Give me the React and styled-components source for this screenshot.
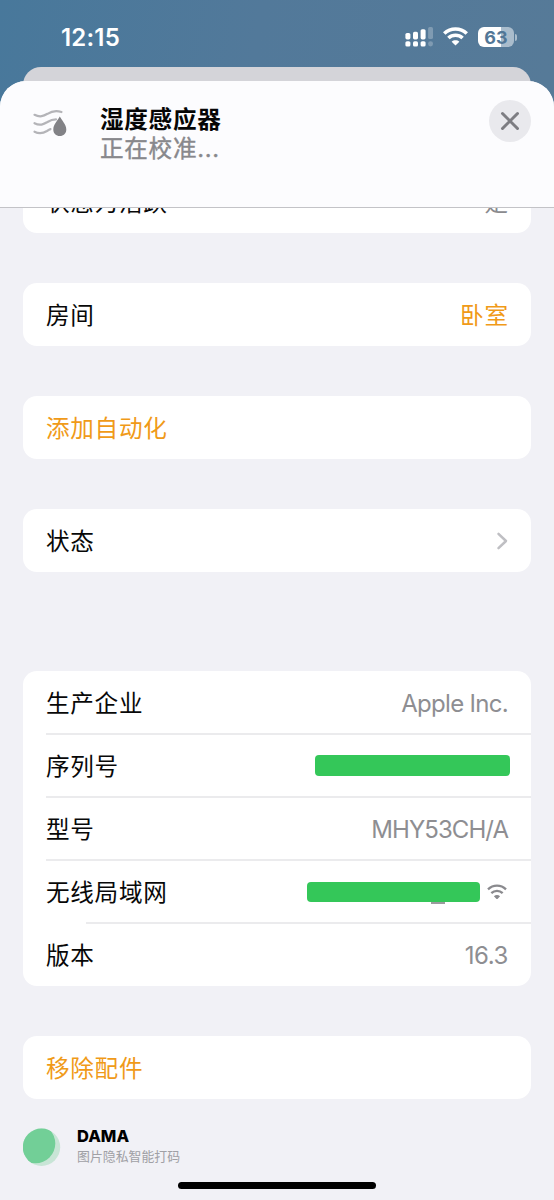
import React from "react";
import styled, { createGlobalStyle } from "styled-components";

const Global = createGlobalStyle`
  *, *::before, *::after { box-sizing: border-box; }
  html, body { margin: 0; padding: 0; }
  body { font-family: Inter, "Noto Sans CJK SC", sans-serif; }
`;

const Screen = styled.div`
  width: 554px;
  height: 1200px;
  overflow: hidden;
  display: flex;
  flex-direction: column;
  background: linear-gradient(100deg, #48789b 0px, #52799a 260px, #567a98 554px);
`;

const StatusBar = styled.div`
  height: 67px;
  flex: none;
  display: flex;
  align-items: flex-start;
  justify-content: space-between;
  padding: 24px 37px 0 61px;
`;

const Clock = styled.div`
  font-size: 24px;
  line-height: 27px;
  font-weight: 600;
  letter-spacing: 0.2px;
  color: #fff;
`;

const StatusIcons = styled.div`
  display: flex;
  align-items: flex-start;
  padding-top: 3px;
`;

const BackSheet = styled.div`
  flex: none;
  height: 26px;
  margin: 0 23px -12px;
  border-radius: 18px 18px 0 0;
  background: #d4d4d9;
`;

const Sheet = styled.div`
  position: relative;
  flex: 1;
  min-height: 0;
  display: flex;
  flex-direction: column;
  border-radius: 26px 26px 0 0;
  overflow: hidden;
  background: #f1f1f6;
`;

const Header = styled.header`
  flex: none;
  height: 127px;
  display: flex;
  align-items: flex-start;
  padding: 0 23px 0 32px;
  background: #fcfcfe;
  border-bottom: 1px solid #c3c3c7;
`;

const HeaderIcon = styled.svg`
  flex: none;
  width: 36px;
  height: 30px;
  margin: 27px 32px 0 0;
`;

const Heading = styled.div`
  flex: 1;
  padding-top: 25px;
  font-size: 23.6px;
  line-height: 28.5px;
  letter-spacing: 0.7px;
`;

const Title = styled.div`
  font-weight: 700;
  color: #060606;
`;

const Subtitle = styled.div`
  color: #88888c;
  -webkit-text-stroke: 0.4px #88888c;
`;

const CloseButton = styled.button`
  flex: none;
  width: 42px;
  height: 42px;
  margin-top: 19px;
  padding: 0;
  border: 0;
  border-radius: 50%;
  background: #e9e9ed;
  display: grid;
  place-items: center;
`;

const Body = styled.main`
  flex: 1;
  min-height: 0;
  overflow: hidden;
  padding: 0 23px;
`;

const List = styled.div`
  display: flex;
  flex-direction: column;
  gap: 50px;
  margin-top: -38px;
`;

const Card = styled.section`
  flex: none;
  border-radius: 14px;
  background: #fff;
  overflow: hidden;
  margin-top: ${(p) => p.$before || 0}px;
`;

const Row = styled.div`
  height: 63px;
  display: flex;
  align-items: center;
  justify-content: space-between;
  padding: 0 23px;
  font-size: 23.6px;
  letter-spacing: 0.7px;
  color: ${(p) => (p.$accent ? "#f09a18" : "#080808")};
`;

const Label = styled.span`
  padding-bottom: 1px;
`;

const Divider = styled.div`
  height: 2px;
  margin: -1px 0 -1px ${(p) => p.$inset || 23}px;
  background: #ebebed;
`;

const Value = styled(Label)`
  color: ${(p) => (p.$accent ? "#f09a18" : "#8a8a8e")};
  margin-right: -0.7px;
`;

const Latin = styled.span`
  font-size: 24px;
  font-weight: 400;
  padding-top: 2px;
  letter-spacing: ${(p) => p.$track || 0}px;
  color: #8e8e92;
`;

const Mask = styled.div`
  width: ${(p) => p.$w}px;
  height: ${(p) => p.$h}px;
  border-radius: 4px;
  background: #34c759;
  margin-right: ${(p) => p.$right || 0}px;
`;

const Network = styled.div`
  display: flex;
  align-items: center;
  gap: 7px;
  margin-right: 1px;
`;

const NetworkName = styled.div`
  display: flex;
  flex-direction: column;
`;

const NameRemainder = styled.div`
  align-self: flex-end;
  width: 14px;
  height: 2px;
  margin: 0 35px -2px 0;
  background: #9b9b9e;
`;

const Footer = styled.footer`
  display: flex;
  align-items: flex-start;
  gap: 16px;
  padding-top: 29px;
`;

const Brand = styled.div`
  display: flex;
  flex-direction: column;
  margin-top: -2px;
`;

const BrandName = styled.div`
  font-size: 16.5px;
  line-height: 20px;
  font-weight: 800;
  color: #000;
`;

const BrandNote = styled.div`
  font-size: 12.9px;
  line-height: 21px;
  color: #a0a0a5;
`;

const HomeIndicator = styled.div`
  width: 198px;
  height: 7px;
  border-radius: 4px;
  background: #000;
  margin: 15px auto 0;
`;

function Signal() {
  return (
    <svg width="28" height="20" viewBox="0 0 28 20" fill="#fff">
      <rect x="0.4" y="5.900" width="5" height="6.500" rx="1.600" />
      <rect x="8" y="4.700" width="5" height="7.700" rx="1.600" />
      <rect x="15.600" y="2.200" width="5" height="10.200" rx="1.600" />
      <rect x="23.100" y="0" width="4.900" height="12" rx="1.600" opacity="0.25" />
      <rect x="0.400" y="14.200" width="5" height="5.300" rx="1.600" />
      <rect x="8" y="14.200" width="5" height="5.300" rx="1.600" />
      <rect x="15.600" y="14.200" width="5" height="5.300" rx="1.600" />
      <rect x="23.100" y="14.200" width="4.900" height="5.300" rx="2.400" opacity="0.25" />
    </svg>
  );
}

function Wifi({ width, height, color, thickness }) {
  return (
    <svg width={width} height={height} viewBox="0 0 24 18" fill="none" stroke={color} strokeWidth={thickness} preserveAspectRatio="none">
      <path d="M1.200 6.300C7.300 .4 16.700 .4 22.800 6.300" />
      <path d="M5.200 10.700C9 7.100 15 7.100 18.800 10.700" />
      <path d="M8.300 14.300C10.400 12.400 13.600 12.400 15.700 14.300L12 18Z" fill={color} stroke="none" />
    </svg>
  );
}

const BatteryBox = styled.div`
  width: 36px;
  height: 20px;
  border-radius: 6px;
  background: linear-gradient(90deg, #fff 63%, #a9bccc 63%);
  color: #527797;
  font-size: 18px;
  line-height: 21px;
  font-weight: 650;
  text-align: center;
`;

const Battery = styled.div`
  display: flex;
  align-items: center;
  gap: 1px;
  margin-left: 10px;
`;

const BatteryTip = styled.div`
  width: 2px;
  height: 7px;
  border-radius: 0 2px 2px 0;
  background: #a9bccc;
`;

const WifiSlot = styled.div`
  margin-left: 10px;
  display: flex;
`;

export default function App() {
  return (
    <Screen>
      <Global />
      <StatusBar>
        <Clock>12:15</Clock>
        <StatusIcons>
          <Signal />
          <WifiSlot>
            <Wifi width={25} height={18.5} color="#fff" thickness={3.4} />
          </WifiSlot>
          <Battery>
            <BatteryBox>63</BatteryBox>
            <BatteryTip />
          </Battery>
        </StatusIcons>
      </StatusBar>
      <BackSheet />
      <Sheet>
        <Header>
          <HeaderIcon viewBox="0 0 36 30" fill="none">
            <g stroke="#b4b4b8" strokeWidth="2.200" strokeLinecap="round">
              <path d="M2.500 6.800C8 9.600 11.500 8.100 15.500 5.800C19.500 3.200 24 2.100 29.500 4" />
              <path d="M2.500 15.200C8 18 11.500 16.400 15.500 14C18.500 12.100 21 11.400 24 11.400" />
              <path d="M2.500 23.700C7.500 26.200 11.500 25.100 15 23C16.500 22 17.500 21.400 18.500 21.100" />
            </g>
            <path d="M27.800 8.600C29.500 11.900 34.300 16.800 34.300 21.400C34.300 25.400 31.500 27.900 27.800 27.900C24.100 27.900 21.300 25.400 21.300 21.400C21.300 16.800 26.100 11.900 27.800 8.600Z" fill="#828286" />
          </HeaderIcon>
          <Heading>
            <Title>湿度感应器</Title>
            <Subtitle>正在校准...</Subtitle>
          </Heading>
          <CloseButton aria-label="关闭">
            <svg width="20" height="20" viewBox="0 0 20 20" stroke="#7d7d82" strokeWidth="3" strokeLinecap="round">
              <path d="M2.500 2.500L17.500 17.500M17.500 2.500L2.500 17.500" />
            </svg>
          </CloseButton>
        </Header>
        <Body>
          <List>
            <Card>
              <Row>
                <Label>状态为活跃</Label>
                <Value>是</Value>
              </Row>
            </Card>
            <Card>
              <Row>
                <Label>房间</Label>
                <Value $accent>卧室</Value>
              </Row>
            </Card>
            <Card>
              <Row $accent>
                <Label>添加自动化</Label>
              </Row>
            </Card>
            <Card>
              <Row>
                <Label>状态</Label>
                <svg width="12" height="18" viewBox="0 0 12 18" fill="none" stroke="#bfbfc3" strokeWidth="2.500" strokeLinecap="round" strokeLinejoin="round">
                  <path d="M2.500 1.800L10 9L2.500 16.200" />
                </svg>
              </Row>
            </Card>
            <Card $before={49}>
              <Row>
                <Label>生产企业</Label>
                <Latin $track={-0.7}>Apple Inc.</Latin>
              </Row>
              <Divider />
              <Row>
                <Label>序列号</Label>
                <Mask $w={195} $h={21} $right={-2} />
              </Row>
              <Divider />
              <Row>
                <Label>型号</Label>
                <Latin $track={-0.95}>MHY53CH/A</Latin>
              </Row>
              <Divider />
              <Row>
                <Label>无线局域网</Label>
                <Network>
                  <NetworkName>
                    <Mask $w={173} $h={20} />
                    <NameRemainder />
                  </NetworkName>
                  <Wifi width={20} height={15.5} color="#8a8a8e" thickness={2.8} />
                </Network>
              </Row>
              <Divider $inset={63} />
              <Row>
                <Label>版本</Label>
                <Latin $track={-0.4}>16.3</Latin>
              </Row>
            </Card>
            <Card>
              <Row $accent>
                <Label>移除配件</Label>
              </Row>
            </Card>
          </List>
          <Footer>
            <svg width="38" height="39" viewBox="0 0 38 39">
              <defs>
                <clipPath id="disc">
                  <circle cx="18.500" cy="19.200" r="18.700" />
                </clipPath>
              </defs>
              <circle cx="18.500" cy="19.200" r="18.700" fill="#c8e5d6" />
              <circle cx="12.500" cy="15.500" r="19.800" fill="#72cf97" clipPath="url(#disc)" />
            </svg>
            <Brand>
              <BrandName>DAMA</BrandName>
              <BrandNote>图片隐私智能打码</BrandNote>
            </Brand>
          </Footer>
          <HomeIndicator />
        </Body>
      </Sheet>
    </Screen>
  );
}
